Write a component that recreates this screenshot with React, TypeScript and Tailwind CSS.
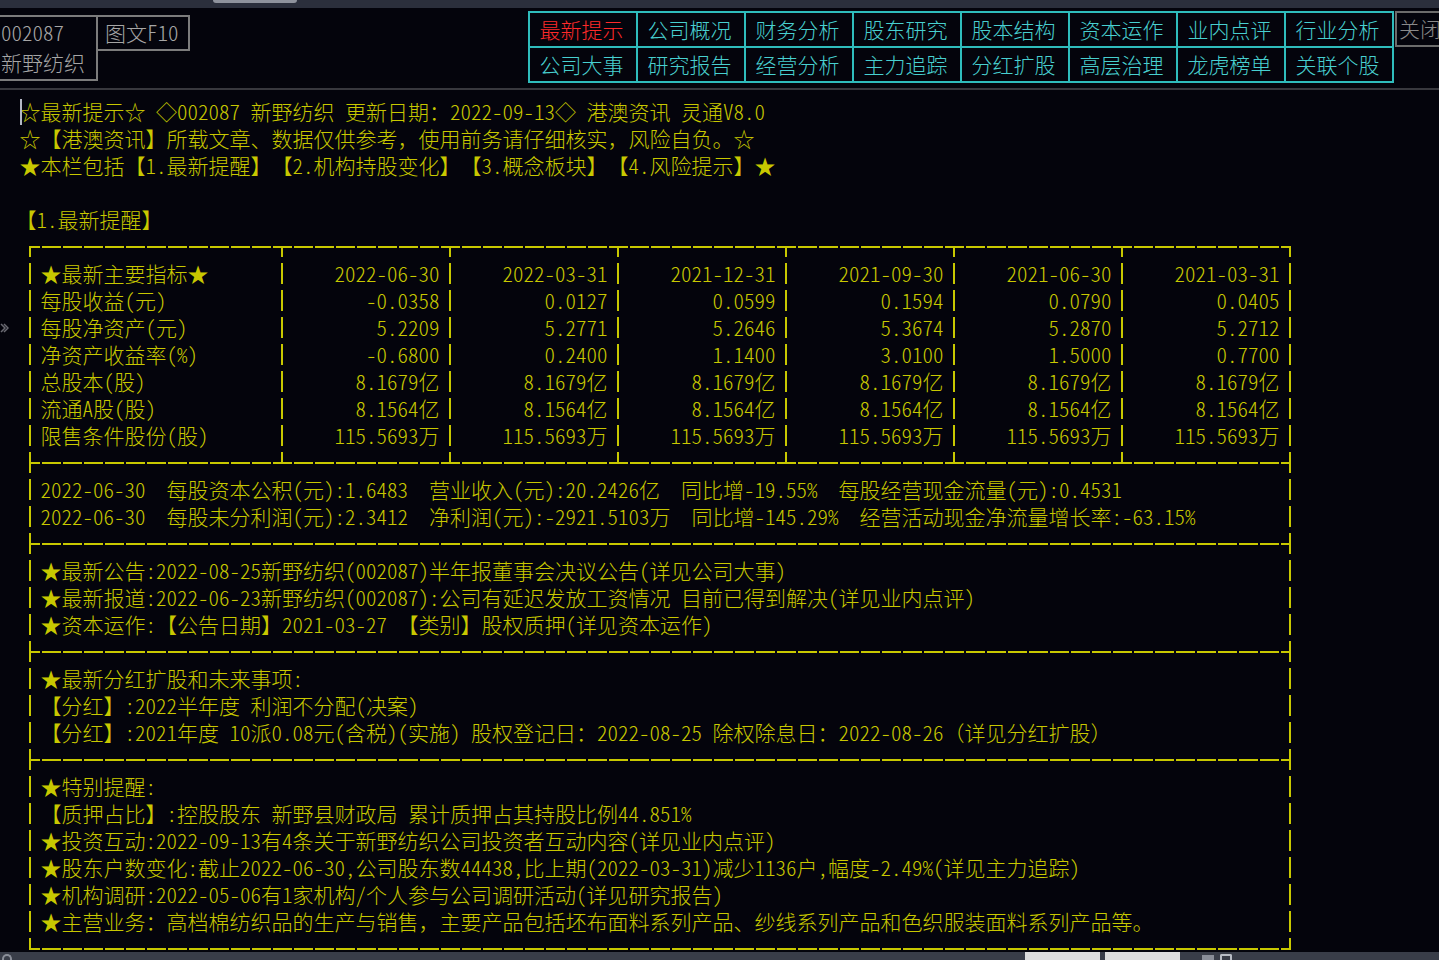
import { Fragment, type ReactNode } from 'react';

const font =
	"font-['Noto_Sans_CJK_SC','Noto_Sans_CJK_JP',sans-serif] [font-feature-settings:'hwid']";

const tabs = [
	['最新提示', '公司概况', '财务分析', '股东研究', '股本结构', '资本运作', '业内点评', '行业分析'],
	['公司大事', '研究报告', '经营分析', '主力追踪', '分红扩股', '高层治理', '龙虎榜单', '关联个股'],
];

const rows: [string, string[]][] = [
	['★最新主要指标★', ['2022-06-30', '2022-03-31', '2021-12-31', '2021-09-30', '2021-06-30', '2021-03-31']],
	['每股收益(元)', ['-0.0358', '0.0127', '0.0599', '0.1594', '0.0790', '0.0405']],
	['每股净资产(元)', ['5.2209', '5.2771', '5.2646', '5.3674', '5.2870', '5.2712']],
	['净资产收益率(%)', ['-0.6800', '0.2400', '1.1400', '3.0100', '1.5000', '0.7700']],
	['总股本(股)', Array(6).fill('8.1679亿')],
	['流通A股(股)', Array(6).fill('8.1564亿')],
	['限售条件股份(股)', Array(6).fill('115.5693万')],
];

// full-width punctuation: keep it out of the half-width feature
function N({ children }: { children: ReactNode }) {
	return <span className="[font-feature-settings:normal]">{children}</span>;
}

// one box-drawing cell (┌ ┬ ├ ┤ ...), 21 x 27
type Arms = { u?: boolean; d?: boolean; l?: boolean; r?: boolean };

function Joint({ u, d, l, r }: Arms) {
	return (
		<div className="flex h-[27px] w-[21px] shrink-0 flex-col">
			<div className="flex h-[12.5px] justify-center pt-[3px]">
				{u && <div className="w-[2px] bg-[#c8c800]" />}
			</div>
			<div className="flex h-[2px] pl-[1px]">
				<div className={l ? 'w-[8.5px] bg-[#c8c800]' : 'w-[8.5px]'} />
				<div className="w-[2px] bg-[#c8c800]" />
				<div className={r ? 'w-[8.5px] bg-[#c8c800]' : 'w-[8.5px]'} />
			</div>
			<div className="flex h-[12.5px] justify-center pb-[3px]">
				{d && <div className="w-[2px] bg-[#c8c800]" />}
			</div>
		</div>
	);
}

function Dash({ n }: { n: number }) {
	return (
		<div
			className="h-[2px] shrink-0 bg-[repeating-linear-gradient(90deg,transparent_0_1px,#c8c800_1px_20px,transparent_20px_21px)]"
			style={{ width: n * 21 }}
		/>
	);
}

function VBar() {
	return (
		<div className="flex h-[27px] w-[21px] shrink-0 items-center justify-center">
			<div className="h-[21px] w-[2px] bg-[#c8c800]" />
		</div>
	);
}

const cols = [11, 7, 7, 7, 7, 7, 7];

function Rule({ kind }: { kind: 'top' | 'split' | 'mid' | 'bottom' }) {
	const first: Arms =
		kind === 'top' ? { d: true, r: true } : kind === 'bottom' ? { u: true, r: true } : { u: true, d: true, r: true };
	const last: Arms =
		kind === 'top' ? { d: true, l: true } : kind === 'bottom' ? { u: true, l: true } : { u: true, d: true, l: true };
	const mid: Arms = kind === 'top' ? { l: true, r: true, d: true } : { l: true, r: true, u: true };
	const spans = kind === 'top' || kind === 'split' ? cols : [59];
	return (
		<div className="flex h-[27px] items-center">
			<Joint {...first} />
			{spans.map((n, i) => (
				<Fragment key={i}>
					<Dash n={n} />
					{i < spans.length - 1 && <Joint {...mid} />}
				</Fragment>
			))}
			<Joint {...last} />
		</div>
	);
}

function BoxLine({ children }: { children?: ReactNode }) {
	return (
		<div className="flex h-[27px] items-center">
			<VBar />
			<span className="w-[1239px] whitespace-pre">{children}</span>
			<VBar />
		</div>
	);
}

function Header() {
	return (
		<div className="flex h-[80px] shrink-0 items-start text-[21px]">
			<div className="mt-[7px] ml-[-4px] h-[66px] w-[102px] shrink-0 border-2 border-[#7c7c7c] pl-[3px] leading-[30px] text-[#a6a6a6]">
				<div>002087</div>
				<div>新野纺织</div>
			</div>
			<div className="mt-[7px] flex h-[36px] w-[92px] shrink-0 items-center border-2 border-l-0 border-[#7c7c7c] pl-[7px] text-[#a6a6a6]">
				图文F10
			</div>
			<div className="mt-[3px] ml-[338px] grid shrink-0 grid-cols-[repeat(8,108px)] border-t-2 border-l-2 border-[#2fbcbc]">
				{tabs.flat().map((t, i) => (
					<div
						key={t}
						className={`flex h-[35px] items-center justify-center border-r-2 border-b-2 pr-[3px] border-[#2fbcbc] ${
							i === 0 ? 'text-[#ff2a2a]' : 'text-[#48d0d0]'
						}`}
					>
						{t}
					</div>
				))}
			</div>
			<div className="mt-[3px] ml-[1px] flex h-[36px] w-[60px] shrink-0 items-center border-2 border-[#6c6c6c] pl-[2px] text-[#8a8a8a]">
				关闭
			</div>
		</div>
	);
}

export default function App() {
	return (
		<div className={`relative flex h-[960px] flex-col overflow-hidden bg-[#04040c] font-light ${font}`}>
			<div className="flex h-[8px] shrink-0 bg-[#2b2f3c]">
				<div className="ml-[213px] h-[3px] w-[84px] rounded-b-[3px] bg-[#8f939d]" />
			</div>
			<Header />
			<div className="h-[2px] shrink-0 bg-[#38383e]" />

			<main className="flex-1 overflow-hidden pt-[8px] pl-[19.5px] text-[21px] leading-[27px] text-[#c8c800]">
				<div className="relative h-[27px] whitespace-pre">
					<span className="absolute top-[1px] left-0 h-[26px] w-[2px] bg-[#b4b8c6]" />
					☆最新提示☆ ◇002087 新野纺织 更新日期：2022-09-13◇ 港澳资讯 灵通V8.0
				</div>
				<div className="h-[27px] whitespace-pre">
					☆【港澳资讯】所载文章、数据仅供参考<N>，</N>使用前务请仔细核实<N>，</N>风险自负。☆
				</div>
				<div className="h-[27px] whitespace-pre">★本栏包括【1.最新提醒】【2.机构持股变化】【3.概念板块】【4.风险提示】★</div>
				<div className="h-[27px]" />
				<div className="ml-[-4px] h-[27px] whitespace-pre">【1.最新提醒】</div>

				<Rule kind="top" />
				{rows.map(([label, vals]) => (
					<div key={label} className="flex h-[27px] items-center">
						<VBar />
						<span className="w-[231px] whitespace-pre">{label}</span>
						<VBar />
						{vals.map((v, i) => (
							<Fragment key={i}>
								<span className="w-[147px] text-right whitespace-pre">{v}</span>
								<VBar />
							</Fragment>
						))}
					</div>
				))}
				<Rule kind="split" />

				<BoxLine>2022-06-30  每股资本公积(元):1.6483  营业收入(元):20.2426亿  同比增-19.55%  每股经营现金流量(元):0.4531</BoxLine>
				<BoxLine>2022-06-30  每股未分利润(元):2.3412  净利润(元):-2921.5103万  同比增-145.29%  经营活动现金净流量增长率:-63.15%</BoxLine>
				<Rule kind="mid" />

				<BoxLine>★最新公告:2022-08-25新野纺织(002087)半年报董事会决议公告(详见公司大事)</BoxLine>
				<BoxLine>★最新报道:2022-06-23新野纺织(002087):公司有延迟发放工资情况 目前已得到解决(详见业内点评)</BoxLine>
				<BoxLine>★资本运作:【公告日期】2021-03-27 【类别】股权质押(详见资本运作)</BoxLine>
				<Rule kind="mid" />

				<BoxLine>★最新分红扩股和未来事项:</BoxLine>
				<BoxLine>【分红】:2022半年度 利润不分配(决案)</BoxLine>
				<BoxLine>
					【分红】:2021年度 10派0.08元(含税)(实施) 股权登记日：2022-08-25 除权除息日：2022-08-26<N>（</N>详见分红扩股<N>）</N>
				</BoxLine>
				<Rule kind="mid" />

				<BoxLine>★特别提醒:</BoxLine>
				<BoxLine>【质押占比】:控股股东 新野县财政局 累计质押占其持股比例44.851%</BoxLine>
				<BoxLine>★投资互动:2022-09-13有4条关于新野纺织公司投资者互动内容(详见业内点评)</BoxLine>
				<BoxLine>★股东户数变化:截止2022-06-30,公司股东数44438,比上期(2022-03-31)减少1136户,幅度-2.49%(详见主力追踪)</BoxLine>
				<BoxLine>★机构调研:2022-05-06有1家机构/个人参与公司调研活动(详见研究报告)</BoxLine>
				<BoxLine>
					★主营业务：高档棉纺织品的生产与销售<N>，</N>主要产品包括坯布面料系列产品、纱线系列产品和色织服装面料系列产品等。
				</BoxLine>
				<Rule kind="bottom" />
			</main>

			<div className="flex h-[8px] shrink-0 items-start bg-[#393d48]">
				<div className="mt-[2px] ml-[2px] h-[6px] w-[10px] rounded-t-full border-2 border-b-0 border-[#8a8e98]" />
				<div className="ml-[1013px] h-[8px] w-[75px] bg-[#dcdcdc]" />
				<div className="ml-[5px] h-[8px] w-[75px] bg-[#dcdcdc]" />
				<div className="mt-[3px] ml-[22px] h-[5px] w-[12px] bg-[#8a8e98]" />
				<div className="mt-[2px] ml-[6px] h-[6px] w-[12px] rounded-t-[2px] border-2 border-b-0 border-[#b8bcc4]" />
			</div>

			<svg className="absolute top-[322px] left-0" width="9" height="12" viewBox="0 0 9 12" fill="none">
				<path d="M1 2l4 4-4 4M4 2l4 4-4 4" stroke="#6a6a72" strokeWidth="1.5" />
			</svg>
		</div>
	);
}
